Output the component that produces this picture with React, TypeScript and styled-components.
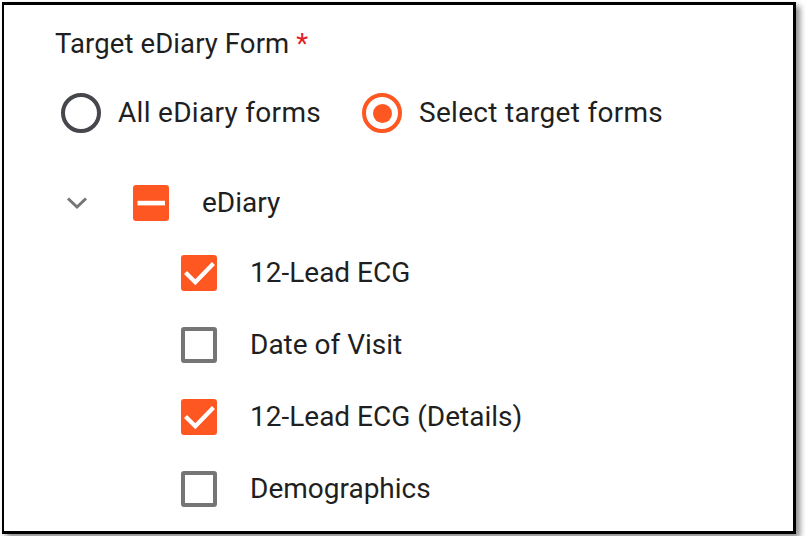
import React from "react";
import styled, { createGlobalStyle } from "styled-components";

const Global = createGlobalStyle`
  html, body { margin: 0; padding: 0; background: #fff; }
  body { font-family: Roboto, "Liberation Sans", Arial, sans-serif; }
  * { box-sizing: border-box; }
`;

const Frame = styled.div`
  margin: 2px;
  width: 794px;
  height: 532px;
  border: 3px solid #000;
  border-left-width: 2px;
  background: #fff;
  box-shadow: 4px 4px 6px rgba(0, 0, 0, 0.45);
  padding: 23px 0 0 51px;
  color: #1f1f21;
  overflow: hidden;
`;

const FieldLabel = styled.div`
  font-size: 27.5px;
  line-height: 32px;
  height: 32px;
  letter-spacing: 0.1px;
`;

const Required = styled.span`
  color: #e0201f;
`;

const RadioGroup = styled.div`
  display: flex;
  align-items: center;
  height: 40px;
  margin-top: 33px;
  margin-left: 6px;
`;

const RadioOption = styled.label`
  display: flex;
  align-items: center;
  gap: 17px;
  font-size: 28px;
  line-height: 32px;
  letter-spacing: 0.3px;
  margin-right: 41px;
`;

const RadioCircle = styled.span<{ $checked?: boolean }>`
  width: 40px;
  height: 40px;
  border-radius: 50%;
  border: 4px solid ${(p) => (p.$checked ? "#fe5722" : "#45474c")};
  display: flex;
  align-items: center;
  justify-content: center;
  &::after {
    content: "";
    width: 19px;
    height: 19px;
    border-radius: 50%;
    background: #fe5722;
    display: ${(p) => (p.$checked ? "block" : "none")};
  }
`;

const Tree = styled.div`
  margin-top: 46px;
  display: flex;
  flex-direction: column;
`;

const ParentRow = styled.div`
  display: flex;
  align-items: center;
  height: 48px;
  padding-left: 11px;
  margin-bottom: 10px;
`;

const Chevron = styled.svg`
  width: 22px;
  height: 14px;
  margin-right: 45px;
`;

const ChildRow = styled.div`
  display: flex;
  align-items: center;
  height: 72px;
  padding-left: 126px;
`;

const Box = styled.span<{ $on?: boolean }>`
  width: 36px;
  height: 36px;
  border-radius: 3px;
  flex: none;
  display: flex;
  align-items: center;
  justify-content: center;
  background: ${(p) => (p.$on ? "#fe5722" : "#fff")};
  border: ${(p) => (p.$on ? "none" : "4px solid #757575")};
`;

const ItemText = styled.span`
  margin-left: 33px;
  font-size: 28px;
  line-height: 32px;
  letter-spacing: 0;
`;

type State = "checked" | "unchecked" | "indeterminate";

function Checkbox({ state }: { state: State }) {
  if (state === "unchecked") return <Box />;
  return (
    <Box $on>
      {state === "checked" ? (
        <svg width="36" height="36" viewBox="0 0 36 36">
          <polyline
            points="6,19 14.3,27.3 31,10"
            fill="none"
            stroke="#fff"
            strokeWidth="4.2"
            strokeLinecap="square"
          />
        </svg>
      ) : (
        <svg width="36" height="36" viewBox="0 0 36 36">
          <rect x="4.5" y="15.8" width="27.5" height="4.6" fill="#fff" />
        </svg>
      )}
    </Box>
  );
}

const items: { label: string; state: State }[] = [
  { label: "12-Lead ECG", state: "checked" },
  { label: "Date of Visit", state: "unchecked" },
  { label: "12-Lead ECG (Details)", state: "checked" },
  { label: "Demographics", state: "unchecked" },
];

export default function App() {
  return (
    <>
      <Global />
      <Frame>
        <FieldLabel>
          Target eDiary Form <Required>*</Required>
        </FieldLabel>
        <RadioGroup>
          <RadioOption>
            <RadioCircle />
            All eDiary forms
          </RadioOption>
          <RadioOption>
            <RadioCircle $checked />
            Select target forms
          </RadioOption>
        </RadioGroup>
        <Tree>
          <ParentRow>
            <Chevron viewBox="0 0 22 14">
              <polyline
                points="2,2.5 11,11 20,2.5"
                fill="none"
                stroke="#767676"
                strokeWidth="3"
              />
            </Chevron>
            <Checkbox state="indeterminate" />
            <ItemText>eDiary</ItemText>
          </ParentRow>
          {items.map((it) => (
            <ChildRow key={it.label}>
              <Checkbox state={it.state} />
              <ItemText>{it.label}</ItemText>
            </ChildRow>
          ))}
        </Tree>
      </Frame>
    </>
  );
}
